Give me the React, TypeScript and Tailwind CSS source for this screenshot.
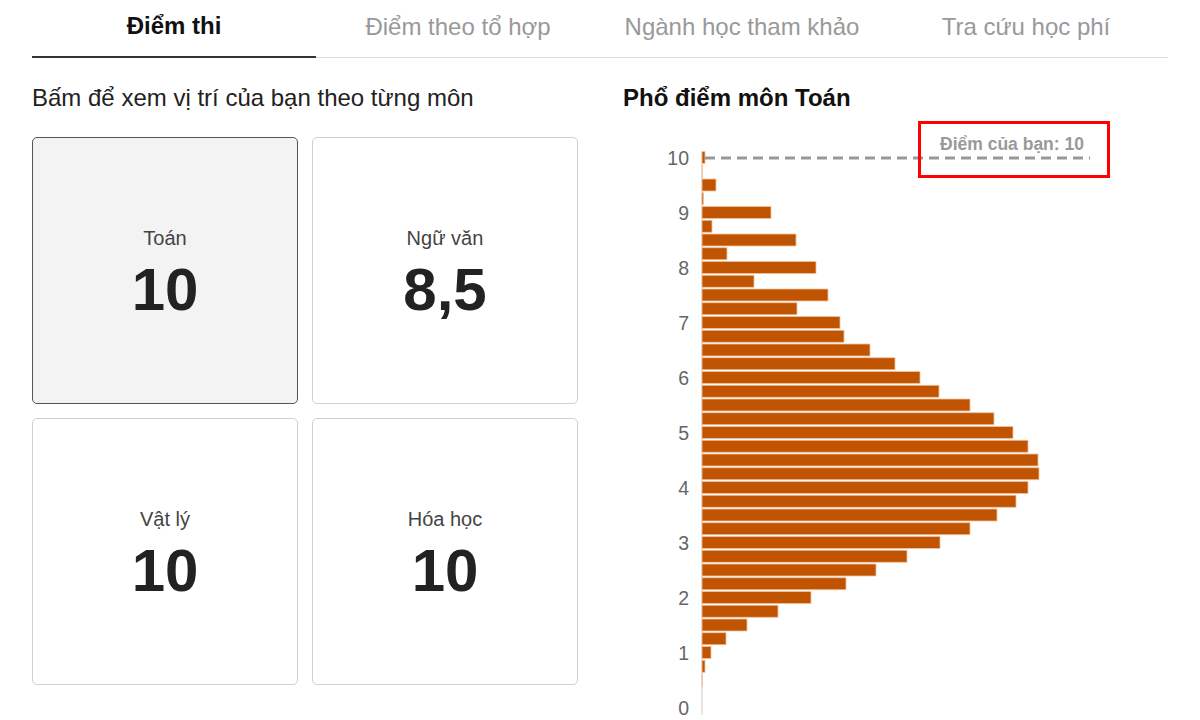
import React from 'react';

const tabs = ['Điểm thi', 'Điểm theo tổ hợp', 'Ngành học tham khảo', 'Tra cứu học phí'];

const subjects = [
  { name: 'Toán', score: '10', active: true },
  { name: 'Ngữ văn', score: '8,5', active: false },
  { name: 'Vật lý', score: '10', active: false },
  { name: 'Hóa học', score: '10', active: false },
];

// bar widths in px, from 10 down to 0 in steps of 0.25
const bars = [
  3, 0.6, 14, 1.5, 69, 10, 94, 25, 114, 52, 126, 95, 138, 142, 168, 193, 218, 237, 268, 292, 311,
  326, 336, 337, 326, 314, 295, 268, 238, 205, 174, 144, 109, 76, 45, 24, 9, 3, 0.6, 0, 0,
];

const AXIS_X = 79;
const yOf = (v: number) => 38.5 + (10 - v) * 55;

const Histogram: React.FC = () => (
  <svg width={545} height={600} className="block" style={{ fontFamily: '"Liberation Sans", Arial, sans-serif' }}>
    {Array.from({ length: 11 }, (_, i) => 10 - i).map((v) => (
      <text key={v} x={66} y={yOf(v) + 7} textAnchor="end" fontSize={19.5} fill="#666">
        {v}
      </text>
    ))}
    <line x1={AXIS_X} y1={33} x2={AXIS_X} y2={596} stroke="#ddd" strokeWidth={1.5} />
    {bars.map((w, i) => {
      const v = 10 - i * 0.25;
      if (w <= 0) return null;
      return (
        <rect
          key={i}
          x={AXIS_X}
          y={yOf(v) - 6}
          width={w}
          height={12}
          fill="#c05400"
          stroke="#f0c4a4"
          strokeWidth={0.8}
        />
      );
    })}
    <line x1={82} y1={39} x2={467} y2={39} stroke="#999" strokeWidth={3} strokeDasharray="10 6" />
    <rect x={296.5} y={3.5} width={189} height={54} fill="none" stroke="#ff0000" strokeWidth={3} />
    <text x={389} y={30.5} textAnchor="middle" fontSize={17.5} fontWeight={700} fill="#999">
      Điểm của bạn: 10
    </text>
  </svg>
);

export default function App() {
  return (
    <div className="w-[1200px] h-[720px] overflow-hidden bg-white px-8 font-['Liberation_Sans',Arial,sans-serif]">
      <div className="flex border-b border-[#ddd] h-[58px]">
        {tabs.map((t, i) => (
          <div
            key={t}
            className={
              i === 0
                ? 'flex-1 flex items-center justify-center pb-1 text-[24px] font-bold text-[#111] border-b-2 border-[#333] -mb-px'
                : 'flex-1 flex items-center justify-center pb-1 text-[24px] text-[#999]'
            }
          >
            {t}
          </div>
        ))}
      </div>

      <div className="flex gap-[45px] pt-[24px]">
        <div className="w-[546px] shrink-0">
          <h2 className="text-[24px] leading-[32px] text-[#222]">Bấm để xem vị trí của bạn theo từng môn</h2>
          <div className="grid grid-cols-2 gap-[14px] mt-[23px]">
            {subjects.map((s) => (
              <div
                key={s.name}
                className={
                  s.active
                    ? 'h-[267px] rounded-[5px] border-[1.5px] border-[#555] bg-[#f3f3f3] flex flex-col items-center justify-center gap-[10px] pt-1'
                    : 'h-[267px] rounded-[5px] border-[1.5px] border-[#d0d0d0] bg-white flex flex-col items-center justify-center gap-[10px] pt-1'
                }
              >
                <div className="text-[20px] leading-[24px] text-[#444]">{s.name}</div>
                <div className="text-[60px] leading-[60px] font-bold text-[#222]">{s.score}</div>
              </div>
            ))}
          </div>
        </div>

        <div className="flex-1">
          <h2 className="text-[24px] leading-[32px] font-bold text-[#111]">Phổ điểm môn Toán</h2>
          <div className="mt-[5px]">
            <Histogram />
          </div>
        </div>
      </div>
    </div>
  );
}
